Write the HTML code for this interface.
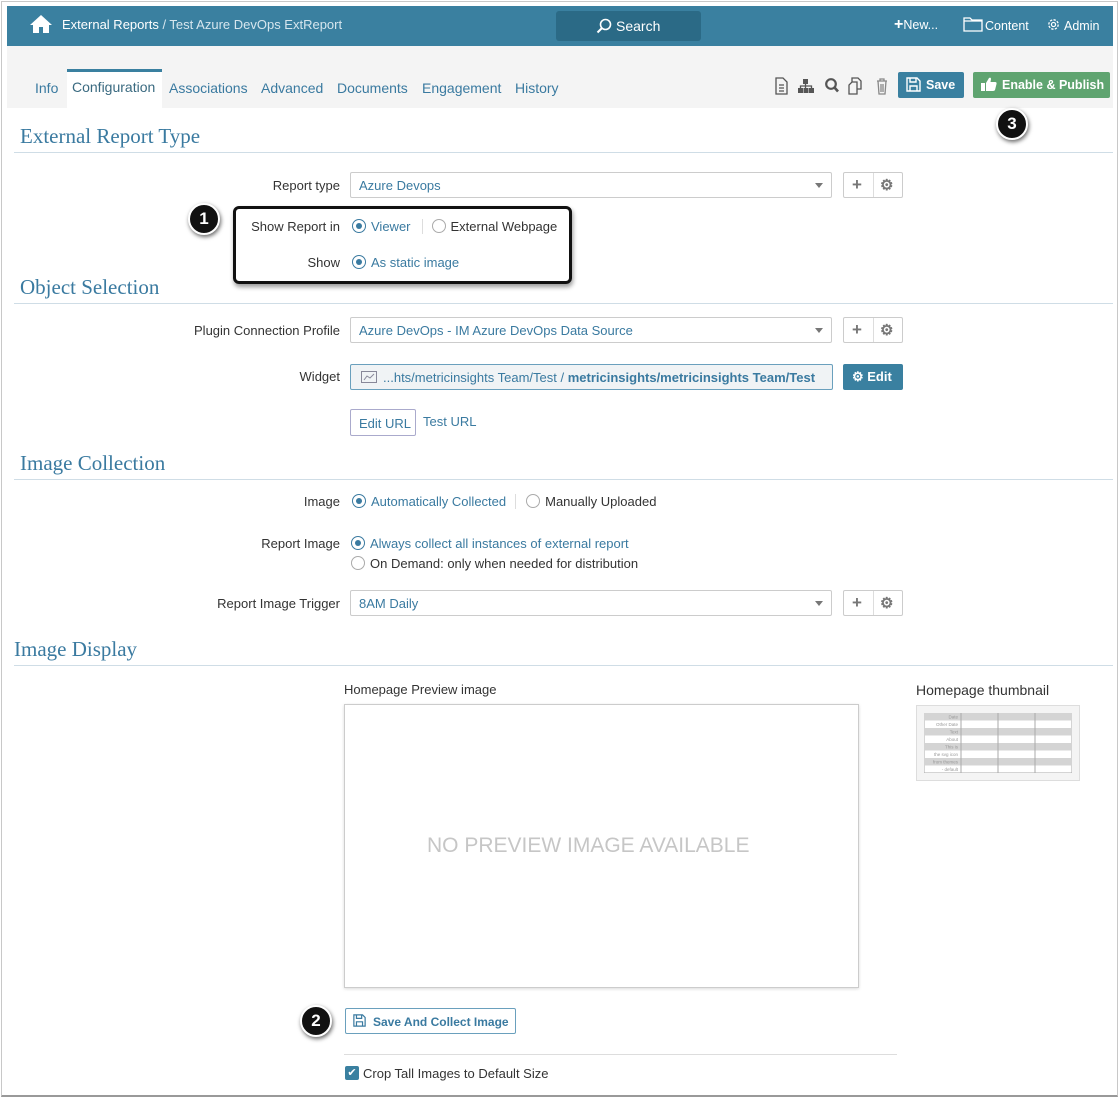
<!DOCTYPE html>
<html><head><meta charset="utf-8"><style>
*{box-sizing:border-box;margin:0;padding:0}
body{width:1120px;height:1099px;position:relative;background:#fff;font-family:"Liberation Sans",Arial,sans-serif;font-size:13px;color:#333;overflow:hidden}
.a{position:absolute;white-space:nowrap}
.frame{position:absolute;left:1px;top:1px;width:1117px;height:1096px;border:1px solid #c8c8c8;border-bottom:2px solid #999}
.hdr{position:absolute;left:7px;top:6px;width:1106px;height:40px;background:#3a80a0}
.tabs{position:absolute;left:7px;top:46px;width:1106px;height:62px;background:#f4f4f4}
.tab{position:absolute;top:80px;font-size:14px;color:#3a7aa0}
.h2{position:absolute;font-family:"Liberation Serif",Georgia,serif;font-size:21px;color:#3a7aa0}
.hl{position:absolute;height:1px;background:#cfdde6;right:7px}
.lbl{position:absolute;text-align:right;width:200px;color:#333}
.sel{position:absolute;left:350px;width:482px;height:26px;border:1px solid #ccc;border-radius:2px;color:#3a7aa0;padding:5px 8px}
.sel:after{content:"";position:absolute;right:8px;top:10px;border:4px solid transparent;border-top:5px solid #777}
.bg{position:absolute;left:843px;width:60px;height:26px;border:1px solid #ccc;border-radius:2px;color:#777;font-size:17px;font-weight:bold}
.bg span{position:absolute;top:2px}
.bg i{position:absolute;left:29px;top:0;bottom:0;border-left:1px solid #ddd}
.rad{display:inline-block;width:14px;height:14px;border:1px solid #3a7aa0;border-radius:50%;position:relative;vertical-align:-2px;margin-right:5px}
.rad.on:after{content:"";position:absolute;left:3px;top:3px;width:6px;height:6px;background:#3a7aa0;border-radius:50%}
.rad.off{border-color:#aaa}
.blue{color:#3a7aa0}
.call{position:absolute;width:32px;height:32px;border-radius:50%;background:#111;border:2px solid #fff;box-shadow:1px 2px 4px rgba(0,0,0,.6);color:#fff;font-weight:bold;font-size:17px;text-align:center;line-height:28px}
</style></head><body>
<div class="frame"></div>
<div class="hdr"></div>
<svg class="a" style="left:29px;top:14px" width="24" height="20" viewBox="0 0 24 20"><path d="M12 1 L1 11 L4 11 L4 19 L10 19 L10 13 L14 13 L14 19 L20 19 L20 11 L23 11 Z" fill="#fff"/></svg>
<div class="a" style="left:62px;top:17px;color:#fff">External Reports <span style="color:#d6e6ee">/ Test Azure DevOps ExtReport</span></div>
<div class="a" style="left:556px;top:11px;width:145px;height:30px;background:#2b6a86;border-radius:3px"></div>
<svg class="a" style="left:596px;top:18px" width="16" height="16" viewBox="0 0 16 16"><circle cx="9.5" cy="6.5" r="5" fill="none" stroke="#fff" stroke-width="1.6"/><path d="M6 10 L1.5 14.5" stroke="#fff" stroke-width="2"/></svg>
<div class="a" style="left:616px;top:18px;color:#fff;font-size:14px">Search</div>
<div class="a" style="left:894px;top:18px;color:#fff;font-size:12.5px"><b style="font-size:16px;line-height:12px">+</b>New...</div>
<svg class="a" style="left:963px;top:17px" width="20" height="15" viewBox="0 0 20 15"><path d="M1 1h6l2 2h10v11H1z M1 4h18" fill="none" stroke="#fff" stroke-width="1.3"/></svg>
<div class="a" style="left:985px;top:19px;color:#fff;font-size:12.5px">Content</div>
<svg class="a" style="left:1046px;top:17px" width="15" height="15" viewBox="0 0 16 16"><circle cx="8" cy="8" r="5" fill="none" stroke="#fff" stroke-width="1.4" stroke-dasharray="2.5 1.4"/><circle cx="8" cy="8" r="2.2" fill="none" stroke="#fff" stroke-width="1.3"/></svg>
<div class="a" style="left:1064px;top:19px;color:#fff;font-size:12.5px">Admin</div>

<div class="tabs"></div>
<div class="a" style="left:67px;top:69px;width:95px;height:40px;background:#fff;border-top:3px solid #3a80a0"></div>
<div class="tab" style="left:35px;color:#3a7aa0">Info</div>
<div class="tab" style="left:72px;color:#3a6a80;top:79px">Configuration</div>
<div class="tab" style="left:169px">Associations</div>
<div class="tab" style="left:261px">Advanced</div>
<div class="tab" style="left:337px">Documents</div>
<div class="tab" style="left:422px">Engagement</div>
<div class="tab" style="left:515px">History</div>
<svg class="a" style="left:774px;top:77px" width="118" height="18" viewBox="0 0 118 18" fill="none" stroke="#555" stroke-width="1.3">
<path d="M2 1h7l4 4v12H2z M5 8h5 M5 11h5 M5 14h5"/>
<g fill="#555" stroke="none"><rect x="29" y="2" width="5" height="5"/><rect x="24" y="11" width="5" height="5"/><rect x="29.5" y="11" width="5" height="5"/><rect x="35" y="11" width="5" height="5"/></g><path d="M31.5 7v4 M26.5 11V9h11v2"/>
<circle cx="57" cy="7" r="4.8" stroke-width="2.2"/><path d="M60.5 10.5l3.5 4" stroke-width="2.6"/>
<path d="M78 5V1h6l3 3v8h-4 M78 5h5v12h-8V8z"/>
<path d="M103 4h10 M106 4V2h4v2 M104 4l1 13h6l1-13 M107 7v8 M109 7v8" stroke="#888"/>
</svg>
<div class="a" style="left:898px;top:72px;width:66px;height:26px;background:#3a80a0;border-radius:2px;color:#fff;font-weight:bold;font-size:12.5px;padding:6px 0 0 28px">Save</div>
<svg class="a" style="left:906px;top:77px" width="15" height="15" viewBox="0 0 15 15"><path d="M1 1h10l3 3v10H1z M4 1v4h6V1 M4 14V9h7v5" fill="none" stroke="#fff" stroke-width="1.4"/></svg>
<div class="a" style="left:973px;top:72px;width:137px;height:26px;background:#5fa470;border-radius:2px;color:#fff;font-weight:bold;font-size:12.5px;padding:6px 0 0 29px">Enable &amp; Publish</div>
<svg class="a" style="left:981px;top:77px" width="16" height="15" viewBox="0 0 16 15"><rect x="0" y="6" width="4" height="8" fill="#fff"/><path d="M5 6 L8 1 Q10 0 10 2 L9.5 5 H14 Q16 5 15.5 7 L14 13 Q13.5 14 12 14 H5 Z" fill="#fff"/></svg>
<div class="call" style="left:996px;top:108px">3</div>

<div class="h2" style="left:20px;top:124px">External Report Type</div>
<div class="hl" style="left:14px;top:152px"></div>
<div class="lbl" style="left:140px;top:178px">Report type</div>
<div class="sel" style="top:172px">Azure Devops</div>
<div class="bg" style="top:172px"><span style="left:8px">+</span><i></i><span style="left:36px;font-size:15px;top:3px">⚙</span></div>
<div class="a" style="left:233px;top:206px;width:339px;height:78px;border:3px solid #111;border-radius:6px;box-shadow:1px 3px 5px rgba(0,0,0,.4)"></div>
<div class="call" style="left:188px;top:203px">1</div>
<div class="lbl" style="left:140px;top:219px">Show Report in</div>
<div class="a" style="left:352px;top:219px"><span class="rad on"></span><span class="blue">Viewer</span><span style="border-left:1px solid #ddd;margin:0 9px 0 11px"></span><span class="rad off"></span>External Webpage</div>
<div class="lbl" style="left:140px;top:255px">Show</div>
<div class="a" style="left:352px;top:255px"><span class="rad on"></span><span class="blue">As static image</span></div>

<div class="h2" style="left:20px;top:275px">Object Selection</div>
<div class="hl" style="left:14px;top:303px"></div>
<div class="lbl" style="left:140px;top:323px">Plugin Connection Profile</div>
<div class="sel" style="top:317px">Azure DevOps - IM Azure DevOps Data Source</div>
<div class="bg" style="top:317px"><span style="left:8px">+</span><i></i><span style="left:36px;font-size:15px;top:3px">⚙</span></div>
<div class="lbl" style="left:140px;top:369px">Widget</div>
<div class="a" style="left:350px;top:364px;width:483px;height:26px;border:1px solid #6aa0bd;border-radius:2px;background:#f0f3f5;padding:5px 0 0 32px;color:#3a7aa0">...hts/metricinsights Team/Test / <b>metricinsights/metricinsights Team/Test</b></div>
<svg class="a" style="left:361px;top:371px" width="16" height="12" viewBox="0 0 16 12" fill="none" stroke="#889"><rect x="0.5" y="0.5" width="15" height="11"/><path d="M3 9l3-4 3 2 4-4"/></svg>
<div class="a" style="left:843px;top:364px;width:60px;height:26px;background:#3a80a0;border-radius:2px;color:#fff;font-weight:bold;padding:5px 0 0 9px">⚙ Edit</div>
<div class="a" style="left:350px;top:409px;width:66px;height:27px;border:1px solid #aac;border-radius:2px;color:#3a7aa0;padding:6px 0 0 8px">Edit URL</div>
<div class="a blue" style="left:423px;top:414px">Test URL</div>

<div class="h2" style="left:20px;top:451px">Image Collection</div>
<div class="hl" style="left:14px;top:479px"></div>
<div class="lbl" style="left:140px;top:494px">Image</div>
<div class="a" style="left:352px;top:494px"><span class="rad on"></span><span class="blue">Automatically Collected</span><span style="border-left:1px solid #ddd;margin:0 10px 0 9px"></span><span class="rad off"></span>Manually Uploaded</div>
<div class="lbl" style="left:140px;top:536px">Report Image</div>
<div class="a" style="left:351px;top:536px"><span class="rad on"></span><span class="blue">Always collect all instances of external report</span></div>
<div class="a" style="left:351px;top:556px"><span class="rad off"></span>On Demand: only when needed for distribution</div>
<div class="lbl" style="left:140px;top:596px">Report Image Trigger</div>
<div class="sel" style="top:590px">8AM Daily</div>
<div class="bg" style="top:590px"><span style="left:8px">+</span><i></i><span style="left:36px;font-size:15px;top:3px">⚙</span></div>

<div class="h2" style="left:14px;top:637px">Image Display</div>
<div class="hl" style="left:14px;top:665px"></div>
<div class="a" style="left:344px;top:682px">Homepage Preview image</div>
<div class="a" style="left:344px;top:704px;width:515px;height:284px;border:1px solid #ccc;box-shadow:0 1px 3px rgba(0,0,0,.15)"></div>
<div class="a" style="left:427px;top:834px;color:#c6c6c6;font-size:21px">NO PREVIEW IMAGE AVAILABLE</div>
<div class="a" style="left:916px;top:682px;font-size:14px">Homepage thumbnail</div>
<div class="a" style="left:916px;top:705px;width:164px;height:76px;border:1px solid #ddd;background:#f4f4f4;padding:7px"></div>
<svg class="a" style="left:924px;top:713px" width="148" height="60" viewBox="0 0 148 60"><rect width="148" height="60" fill="#fff" stroke="#aaa"/><g fill="#d4d4d4"><rect y="0" width="148" height="7.5"/><rect y="15" width="148" height="7.5"/><rect y="30" width="148" height="7.5"/><rect y="45" width="148" height="7.5"/></g><g stroke="#aaa"><path d="M37 0v60M74 0v60M111 0v60"/></g><g fill="#999" font-size="4.5" font-family="Liberation Sans" text-anchor="end"><text x="34" y="5.5">Date</text><text x="34" y="13">Other Date</text><text x="34" y="20.5">Text</text><text x="34" y="28">About</text><text x="34" y="35.5">This is</text><text x="34" y="43">the svg icon</text><text x="34" y="50.5">from themes</text><text x="34" y="58">- default</text></g></svg>

<div class="call" style="left:300px;top:1005px">2</div>
<div class="a" style="left:345px;top:1008px;width:171px;height:26px;border:1px solid #6aa0bd;border-radius:2px;color:#3a7aa0;font-weight:bold;font-size:12px;padding:6px 0 0 27px">Save And Collect Image</div>
<svg class="a" style="left:353px;top:1014px" width="13" height="13" viewBox="0 0 15 15"><path d="M1 1h10l3 3v10H1z M4 1v4h6V1 M4 14V9h7v5" fill="none" stroke="#3a7aa0" stroke-width="1.4"/></svg>
<div class="a" style="left:344px;top:1054px;width:553px;height:1px;background:#ddd"></div>
<div class="a" style="left:345px;top:1066px;width:14px;height:14px;background:#3a80a0;border-radius:2px;color:#fff;font-size:11px;text-align:center;line-height:14px">✔</div>
<div class="a" style="left:363px;top:1066px">Crop Tall Images to Default Size</div>
</body></html>
